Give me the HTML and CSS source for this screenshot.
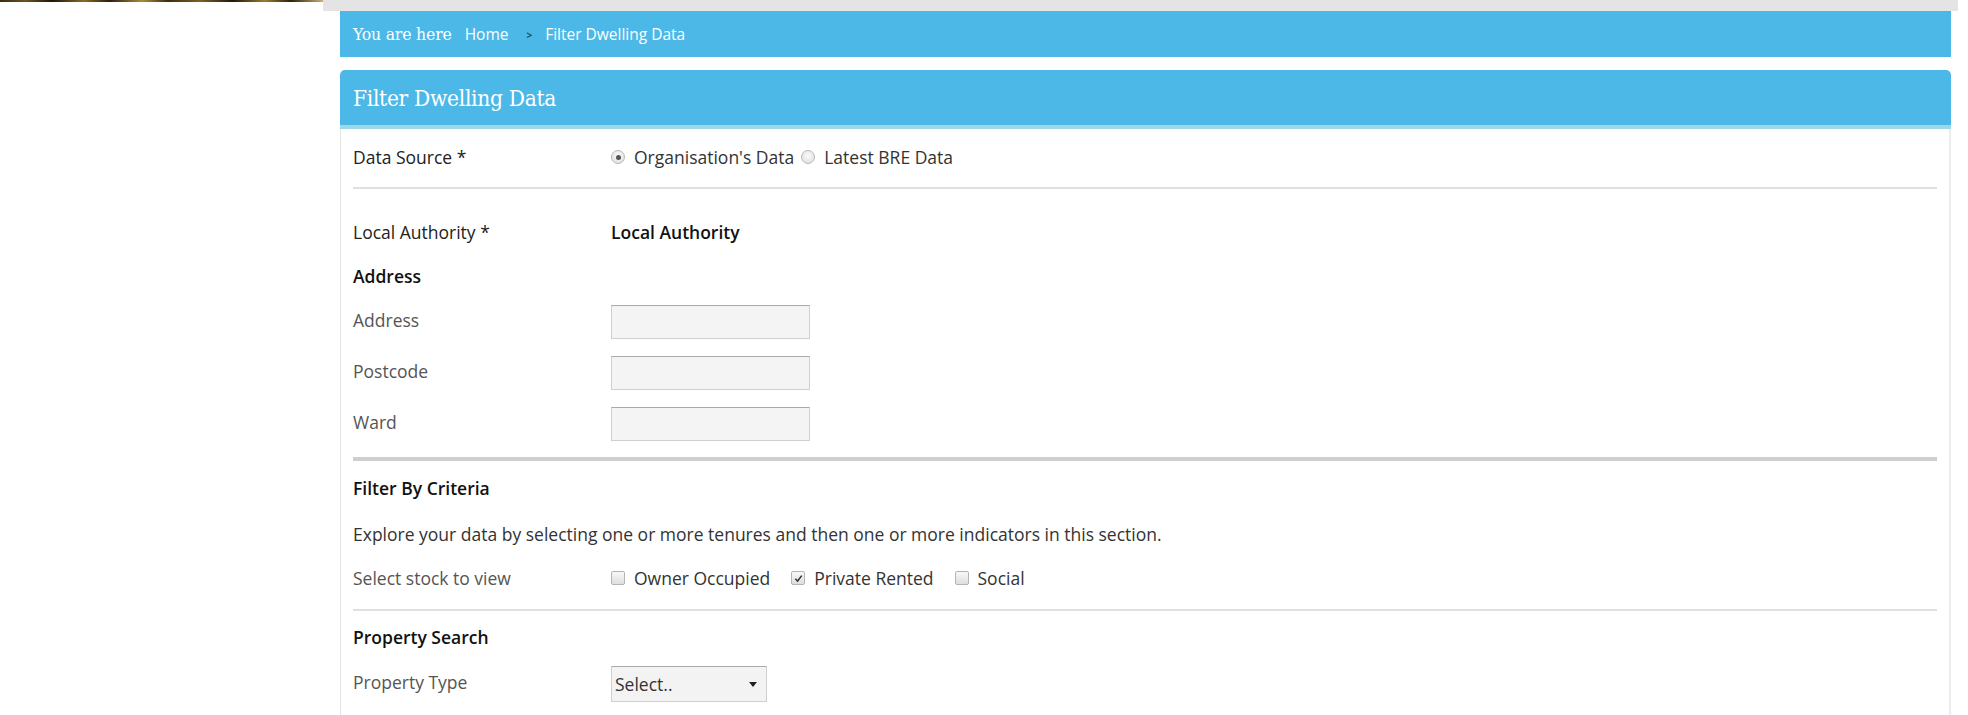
FILE: index.html
```html
<!DOCTYPE html>
<html lang="en">
<head>
<meta charset="utf-8">
<title>Filter Dwelling Data</title>
<link rel="stylesheet" href="styles.css">
</head>
<body>
<div class="page">
  <aside class="sidebar">
    <div class="banner-edge"></div>
  </aside>
  <main class="main">
    <div class="topbar"></div>
    <div class="content">
      <nav class="breadcrumb">
        <span class="crumb-lead">You are here</span>
        <a class="crumb-link" href="#">Home</a>
        <span class="crumb-sep">&gt;</span>
        <span class="crumb-current">Filter Dwelling Data</span>
      </nav>

      <section class="card">
        <header class="card-head">Filter Dwelling Data</header>
        <div class="card-body">
          <div class="row row-source">
            <div class="label label-dark">Data Source *</div>
            <div class="field options">
              <label class="opt"><span class="radio checked"></span>Organisation's Data</label>
              <label class="opt"><span class="radio"></span>Latest BRE Data</label>
            </div>
          </div>
          <hr class="rule">

          <div class="row row-la">
            <div class="label label-dark">Local Authority *</div>
            <div class="field strong">Local Authority</div>
          </div>

          <div class="subhead sub-address">Address</div>

          <div class="row row-input">
            <div class="label">Address</div>
            <div class="field"><span class="textbox"></span></div>
          </div>
          <div class="row row-input">
            <div class="label">Postcode</div>
            <div class="field"><span class="textbox"></span></div>
          </div>
          <div class="row row-input">
            <div class="label">Ward</div>
            <div class="field"><span class="textbox"></span></div>
          </div>

          <hr class="rule rule-thick">

          <div class="subhead sub-criteria">Filter By Criteria</div>
          <p class="intro">Explore your data by selecting one or more tenures and then one or more indicators in this section.</p>

          <div class="row row-stock">
            <div class="label">Select stock to view</div>
            <div class="field options">
              <label class="opt opt-wide"><span class="check"></span>Owner Occupied</label>
              <label class="opt opt-wide"><span class="check checked"><svg viewBox="0 0 10 10" width="9" height="9"><path d="M1.5 5.2 L4 7.8 L8.6 1.8" fill="none" stroke="#333" stroke-width="1.7"/></svg></span>Private Rented</label>
              <label class="opt opt-wide"><span class="check"></span>Social</label>
            </div>
          </div>

          <hr class="rule rule-bottom">

          <div class="subhead sub-property">Property Search</div>

          <div class="row row-select">
            <div class="label">Property Type</div>
            <div class="field">
              <span class="selectbox"><span class="select-text">Select..</span><span class="caret"></span></span>
            </div>
          </div>
        </div>
      </section>
    </div>
  </main>
</div>
</body>
</html>
```

FILE: styles.css
```css
html, body {
  margin: 0;
  padding: 0;
  background: #ffffff;
}

body {
  font-family: "Open Sans", "Noto Sans", sans-serif;
  font-size: 17.5px;
  color: #333;
  overflow: hidden;
}

.page {
  display: grid;
  grid-template-columns: 323px 1635px 1fr;
  height: 715px;
  overflow: hidden;
}

/* sidebar: only the bottom edge of the banner photo is visible */
.sidebar {
  background: #fff;
}

.banner-edge {
  height: 2px;
  background: linear-gradient(90deg, #3a2c10 0%, #6d5420 8%, #1d1608 16%, #8a6a2a 26%, #2a200c 34%, #b08a3a 44%, #3c2d10 52%, #7c6126 62%, #201808 72%, #9c7a34 82%, #2d220c 90%, #c8b070 100%);
}

.main {
  display: flex;
  flex-direction: column;
}

.topbar {
  height: 11px;
  background: #e4e4e4;
}

.content {
  padding: 0 7px 0 17px;
}

/* breadcrumb strip */
.breadcrumb {
  height: 46px;
  background: #4bb8e8;
  display: flex;
  align-items: center;
  padding-left: 13px;
  color: #fff;
  margin-bottom: 13px;
}

.crumb-lead {
  font-family: "DejaVu Serif", serif;
  font-stretch: condensed;
  font-size: 17.5px;
  margin-right: 13px;
  letter-spacing: -0.2px;
}

.crumb-link {
  color: #fff;
  text-decoration: none;
  font-size: 15.5px;
  margin-right: 18px;
}

.crumb-sep {
  color: #1d4f6a;
  font-size: 10px;
  font-weight: bold;
  margin-right: 13px;
  position: relative;
  top: 1px;
}

.crumb-current {
  font-size: 15.5px;
}

/* card */
.card {
  display: flex;
  flex-direction: column;
}

.card-head {
  height: 55px;
  background: #4bb8e8;
  border-bottom: 4px solid #9fd7e2;
  border-radius: 5px 5px 0 0;
  color: #fff;
  font-family: "DejaVu Serif", serif;
  font-stretch: condensed;
  font-size: 22.5px;
  display: flex;
  align-items: center;
  padding-left: 13px;
  letter-spacing: -0.3px;
}

.card-body {
  border-left: 1px solid #e4e4e4;
  border-right: 2px solid #ececec;
  padding: 0 12px;
  height: 700px;
}

.row {
  display: flex;
  align-items: center;
}

.label {
  width: 258px;
  flex: none;
  color: #555;
}

.label-dark {
  color: #222;
}

.field {
  display: flex;
  align-items: center;
  color: #333;
}

.strong {
  font-weight: 600;
  color: #111;
}

.options {
  gap: 7px;
}

.opt {
  display: flex;
  align-items: center;
  color: #333;
}

.opt-wide {
  margin-right: 14px;
}

.radio {
  width: 12px;
  height: 12px;
  border-radius: 50%;
  border: 1px solid #b8b8b8;
  background: radial-gradient(circle at 50% 40%, #fafafa, #dcdcdc);
  margin-right: 9px;
  position: relative;
  flex: none;
}

.radio.checked::after {
  content: "";
  position: absolute;
  left: 3.5px;
  top: 3.5px;
  width: 5px;
  height: 5px;
  border-radius: 50%;
  background: #555;
}

.check {
  width: 12px;
  height: 12px;
  border: 1px solid #b4b4b4;
  border-radius: 2px;
  background: linear-gradient(#f8f8f8, #dedede);
  margin-right: 9px;
  display: flex;
  align-items: center;
  justify-content: center;
  flex: none;
}

.row-source {
  height: 30px;
  padding: 13px 0 15px;
}

.rule {
  margin: 0;
  border: 0;
  height: 2px;
  background: #e0e0e0;
}

.rule-thick {
  height: 4px;
  background: #cfcfcf;
  margin-top: 16px;
}

.rule-bottom {
  margin-top: 19px;
}

.row-la {
  height: 24px;
  margin-top: 31px;
}

.subhead {
  font-weight: 600;
  color: #111;
  height: 24px;
  display: flex;
  align-items: center;
}

.sub-address {
  margin-top: 20px;
}

.row-input {
  margin-top: 17px;
}

.row-input .label,
.row-select .label {
  margin-bottom: 5px;
}

.textbox {
  display: block;
  width: 197px;
  height: 32px;
  background: #f4f4f4;
  border: 1px solid #cfcfcf;
  border-top-color: #a9a9a9;
}

.sub-criteria {
  margin-top: 15px;
}

.intro {
  margin: 22px 0 0;
  height: 24px;
  display: flex;
  align-items: center;
  color: #333;
}

.row-stock {
  height: 24px;
  margin-top: 20px;
}

.sub-property {
  margin-top: 14px;
}

.row-select {
  margin-top: 17px;
}

.selectbox {
  background: #f3f3f3;
  border: 1px solid #cfcfcf;
  border-top-color: #a9a9a9;
  display: flex;
  align-items: center;
  justify-content: space-between;
  padding: 0 9px 0 3px;
  box-sizing: border-box;
  width: 156px;
  height: 36px;
}

.select-text {
  color: #333;
}

.caret {
  width: 0;
  height: 0;
  border-left: 4px solid transparent;
  border-right: 4px solid transparent;
  border-top: 5px solid #222;
}
```
